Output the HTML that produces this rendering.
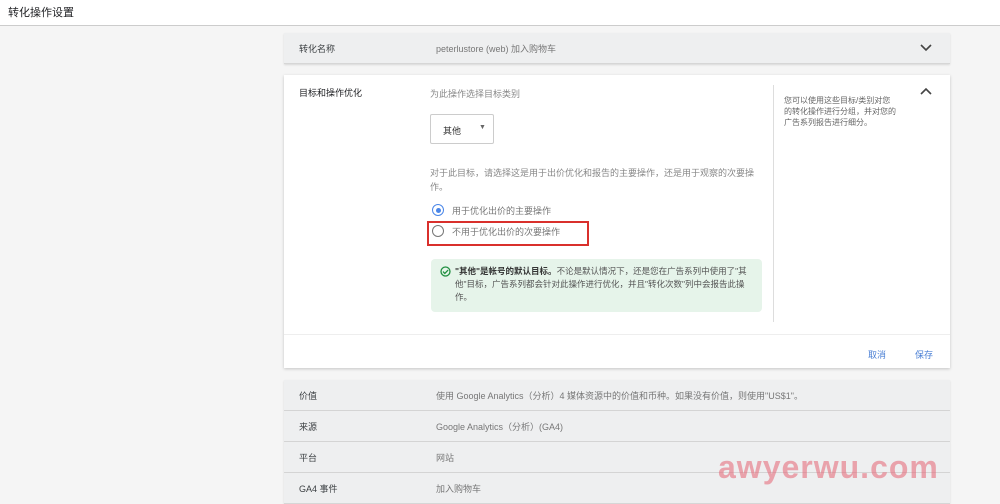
<!DOCTYPE html><html><head><meta charset="utf-8"><style>
body{margin:0;width:1000px;height:496px;overflow:hidden;background:#f5f5f5;font-family:"Liberation Sans","Noto Sans CJK SC",sans-serif;font-size:9px;color:#5f6368;position:relative}
.a{position:absolute}
.hdr{left:0;top:0;width:1000px;height:25px;background:#fff;border-bottom:1px solid #ccc;font-size:11px;color:#202124}
.row{left:284px;width:666px;height:30px;background:#eeeff0;border-bottom:1px solid #d6d6d6;box-shadow:0 1px 2px rgba(0,0,0,.12)}
.row .l{position:absolute;left:15px;top:9px;color:#3c4043}
.row .v{position:absolute;left:152px;top:9px;color:#777}
</style></head><body>
<div class="a hdr"><span class="a" style="left:8px;top:4px">转化操作设置</span></div>
<div class="a row" style="top:33px;height:30px"><span class="l">转化名称</span><span class="v" style="left:152px">peterlustore (web) 加入购物车</span>
<svg class="a" style="left:636px;top:10px" width="12" height="10"><path d="M1 2l5 5 5-5" stroke="#444" stroke-width="1.6" fill="none"/></svg></div>
<div class="a" style="left:284px;top:75px;width:666px;height:293px;background:#fff;box-shadow:0 1px 3px rgba(0,0,0,.2)">
<span class="a" style="left:15px;top:11px;color:#202124">目标和操作优化</span>
<span class="a" style="left:146px;top:12px;color:#888">为此操作选择目标类别</span>
<div class="a" style="left:146px;top:39px;width:64px;height:30px;border:1px solid #ccc;border-radius:2px;box-sizing:border-box"><span class="a" style="left:12px;top:9px;color:#333">其他</span><span class="a" style="left:48px;top:9px;font-size:7px;color:#666">▼</span></div>
<div class="a" style="left:146px;top:91px;width:330px;line-height:14px;color:#888">对于此目标，请选择这是用于出价优化和报告的主要操作，还是用于观察的次要操作。</div>
<div class="a" style="left:148px;top:129px;width:10px;height:10px;border:1.5px solid #4a86e8;border-radius:50%"><div class="a" style="left:2.5px;top:2.5px;width:5px;height:5px;border-radius:50%;background:#4a86e8"></div></div>
<span class="a" style="left:168px;top:129px;color:#777">用于优化出价的主要操作</span>
<div class="a" style="left:148px;top:150px;width:10px;height:10px;border:1.5px solid #777;border-radius:50%"></div>
<span class="a" style="left:168px;top:150px;color:#777">不用于优化出价的次要操作</span>
<div class="a" style="left:143px;top:146px;width:162px;height:25px;border:2px solid #d9302c;box-sizing:border-box"></div>
<div class="a" style="left:147px;top:184px;width:331px;height:53px;background:#e6f4ea;border-radius:4px"><svg class="a" style="left:9px;top:7px" width="11" height="11"><circle cx="5.5" cy="5.5" r="4.5" stroke="#1e8e3e" stroke-width="1.3" fill="none"/><path d="M3 5.6l1.8 1.8 3.3-3.3" stroke="#1e8e3e" stroke-width="1.3" fill="none"/></svg>
<div class="a" style="left:24px;top:6px;width:300px;line-height:13px;font-size:8.5px;color:#555"><b style="color:#333">"其他"是帐号的默认目标。</b>不论是默认情况下，还是您在广告系列中使用了"其他"目标，广告系列都会针对此操作进行优化，并且"转化次数"列中会报告此操作。</div></div>
<div class="a" style="left:489px;top:10px;width:1px;height:237px;background:#ddd"></div>
<div class="a" style="left:500px;top:20px;width:112px;line-height:11px;font-size:8px;color:#666">您可以使用这些目标/类别对您的转化操作进行分组，并对您的广告系列报告进行细分。</div>
<svg class="a" style="left:636px;top:12px" width="12" height="10"><path d="M1 7l5-5 5 5" stroke="#444" stroke-width="1.6" fill="none"/></svg>
<div class="a" style="left:0;top:259px;width:666px;height:1px;background:#eee"></div>
<span class="a" style="left:584px;top:273px;color:#4a7fd4">取消</span>
<span class="a" style="left:631px;top:273px;color:#4a7fd4">保存</span>
</div>
<div class="a row" style="top:380px"><span class="l">价值</span><span class="v">使用 Google Analytics（分析）4 媒体资源中的价值和币种。如果没有价值，则使用"US$1"。</span></div>
<div class="a row" style="top:411px"><span class="l">来源</span><span class="v">Google Analytics（分析）(GA4)</span></div>
<div class="a row" style="top:442px"><span class="l">平台</span><span class="v">网站</span></div>
<div class="a row" style="top:473px"><span class="l">GA4 事件</span><span class="v">加入购物车</span></div>
<div class="a" style="left:718px;top:449px;font-size:32px;font-weight:bold;color:rgba(230,110,125,.6);letter-spacing:1px">awyerwu.com</div>
</body></html>
